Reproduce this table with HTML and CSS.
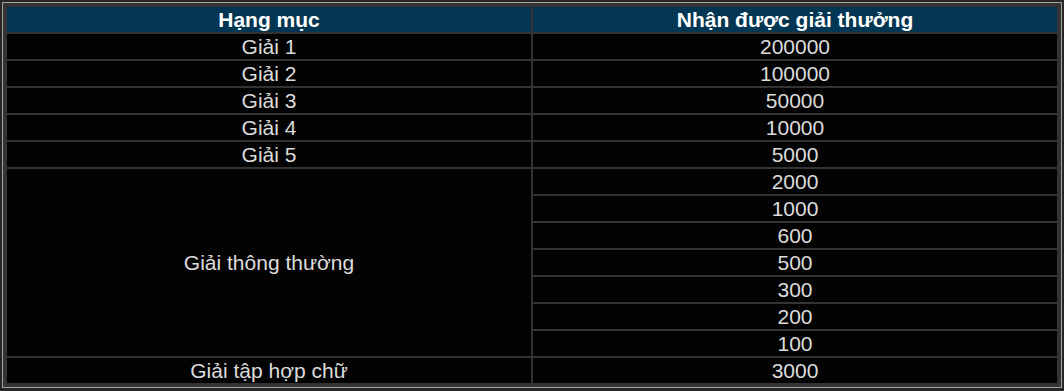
FILE: index.html
```html
<!DOCTYPE html>
<html lang="vi">
<head>
<meta charset="utf-8">
<link rel="stylesheet" href="styles.css">
</head>
<body>
<div class="frame">
  <div class="grid">
    <div class="cell head">Hạng mục</div>
    <div class="cell head">Nhận được giải thưởng</div>
    <div class="cell">Giải 1</div><div class="cell">200000</div>
    <div class="cell">Giải 2</div><div class="cell">100000</div>
    <div class="cell">Giải 3</div><div class="cell">50000</div>
    <div class="cell">Giải 4</div><div class="cell">10000</div>
    <div class="cell">Giải 5</div><div class="cell">5000</div>
    <div class="cell span7">Giải thông thường</div><div class="cell">2000</div>
    <div class="cell">1000</div>
    <div class="cell">600</div>
    <div class="cell">500</div>
    <div class="cell">300</div>
    <div class="cell">200</div>
    <div class="cell">100</div>
    <div class="cell">Giải tập hợp chữ</div><div class="cell">3000</div>
  </div>
</div>
</body>
</html>
```

FILE: styles.css
```css
html, body {
  margin: 0;
  padding: 0;
  background: #262626;
}
body {
  padding: 2px 2px 3px 2px;
  font-family: "Liberation Sans", Arial, sans-serif;
}
.frame {
  border: 1px solid #a3a3a3;
  background: #333333;
  padding: 4px;
}
.grid {
  display: grid;
  grid-template-columns: 524px 524px;
  grid-auto-rows: 25px;
  gap: 2px;
}
.cell {
  background: #030303;
  color: #dcdcdc;
  font-size: 21px;
  display: flex;
  align-items: center;
  justify-content: center;
  line-height: 1;
}
.head {
  background: #033652;
  color: #ffffff;
  font-weight: bold;
}
.span7 {
  grid-row: span 7;
}
```
